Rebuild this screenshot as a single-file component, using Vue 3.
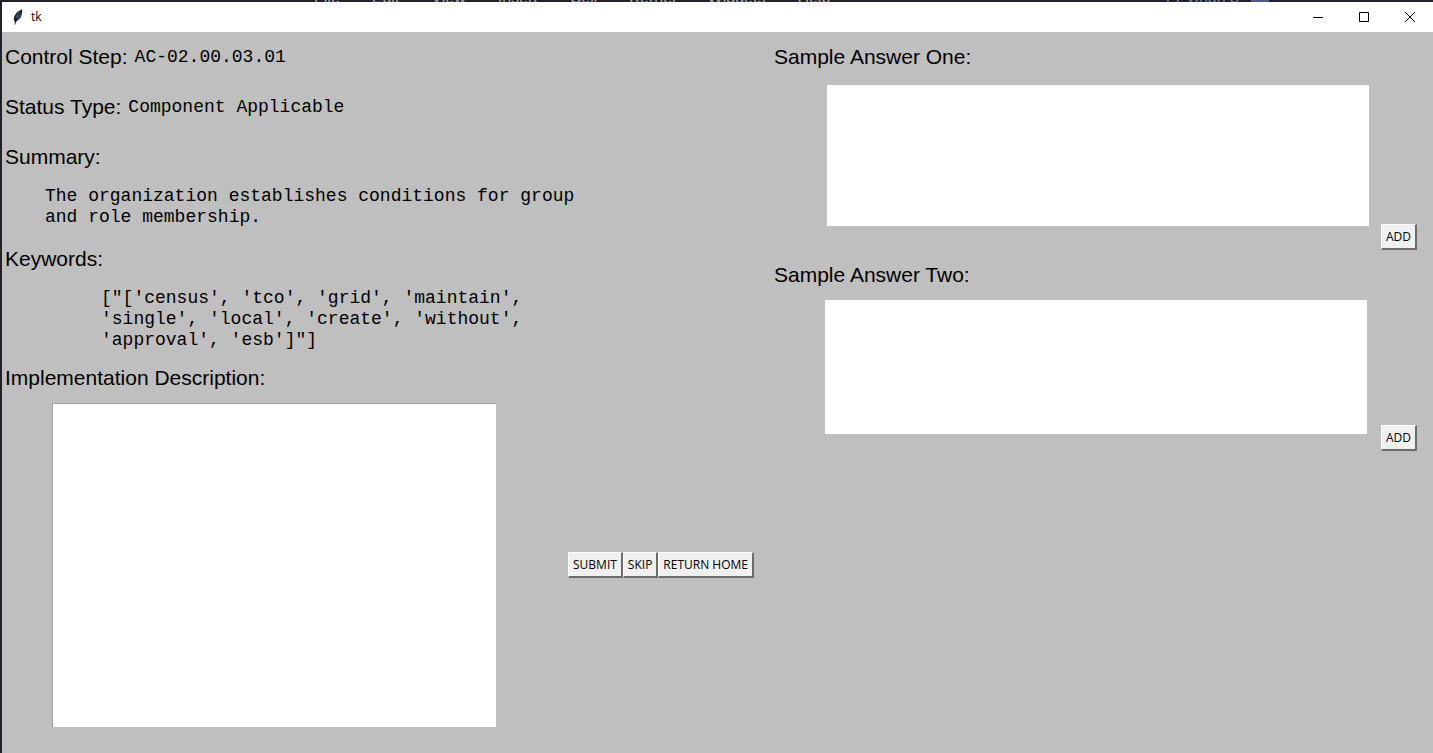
<script setup>
import { ref } from 'vue'

const menus = ['File', 'Edit', 'View', 'Insert', 'Cell', 'Kernel', 'Widgets', 'Help']
const description = ref('')
const samples = ref([
  { id: 'one', title: 'Sample Answer One:', text: '' },
  { id: 'two', title: 'Sample Answer Two:', text: '' }
])
const summary = 'The organization establishes conditions for group\nand role membership.'
const keywords = `["['census', 'tco', 'grid', 'maintain',\n'single', 'local', 'create', 'without',\n'approval', 'esb']"]`

function add(sample) {
  description.value += sample.text
}
</script>

<template>
  <div class="desktop">
    <div class="backdrop" aria-hidden="true">
      <span v-for="m in menus" :key="m">{{ m }}</span>
      <span class="kernel">( Python 3</span>
      <i class="badge"></i>
    </div>
    <main class="window">
      <header class="titlebar">
        <svg class="feather" viewBox="0 0 12 16" width="12" height="16" aria-hidden="true">
          <path d="M10 0.5C7 1 3 4.5 2 8.500C1.600 10.500 2 12 3 13.200C6.500 11.500 9 9 9.600 6C10 4 10.600 2 10 0.500Z" fill="#16222e" />
          <path d="M9 2C6.500 3.500 4.500 6 3.600 9.500L4.600 9C6 6 7.500 4 9 2Z" fill="#86b4de" />
          <path d="M8.800 4.500C7.500 6.500 5.500 8.500 4.200 11.500C6.500 10 8.200 7.500 8.800 4.500Z" fill="#4f7ca8" />
          <path d="M8.800 2.500C5.500 6 4 9 3 15.500" fill="none" stroke="#0b1015" stroke-width="0.900" />
        </svg>
        <h1>tk</h1>
        <div class="controls">
          <button type="button" aria-label="Minimize">
            <svg viewBox="0 0 12 12" width="12" height="12"><path d="M1 6.500H11" /></svg>
          </button>
          <button type="button" aria-label="Maximize">
            <svg viewBox="0 0 12 12" width="12" height="12"><path d="M1.500 1.500H10.500V10.500H1.500Z" /></svg>
          </button>
          <button type="button" aria-label="Close">
            <svg viewBox="0 0 12 12" width="12" height="12"><path d="M1 1L11 11M11 1L1 11" /></svg>
          </button>
        </div>
      </header>

      <div class="columns">
        <section class="details">
          <div class="row">
            <span class="label">Control Step:</span>
            <span class="mono">AC-02.00.03.01</span>
          </div>
          <div class="row">
            <span class="label">Status Type:</span>
            <span class="mono">Component Applicable</span>
          </div>
          <h2 class="label">Summary:</h2>
          <p class="mono summary">{{ summary }}</p>
          <h2 class="label">Keywords:</h2>
          <p class="mono keywords">{{ keywords }}</p>
          <label class="label" for="description">Implementation Description:</label>
          <div class="entry">
            <textarea id="description" v-model="description"></textarea>
            <div class="actions">
              <button class="btn" type="button">SUBMIT</button>
              <button class="btn" type="button">SKIP</button>
              <button class="btn" type="button">RETURN HOME</button>
            </div>
          </div>
        </section>

        <section class="samples">
          <div v-for="s in samples" :key="s.id" class="sample" :class="s.id">
            <label class="label" :for="s.id">{{ s.title }}</label>
            <div class="answer">
              <textarea :id="s.id" v-model="s.text"></textarea>
              <button class="btn" type="button" @click="add(s)">ADD</button>
            </div>
          </div>
        </section>
      </div>
    </main>
  </div>
</template>

<style>
body {
  margin: 0;
  background: #bfbfbf;
}
</style>

<style scoped>
* {
  box-sizing: border-box;
}
.desktop {
  display: flex;
  flex-direction: column;
  min-height: 100vh;
  background: #222127;
  color: #000;
}
.backdrop {
  display: flex;
  align-items: flex-end;
  gap: 32px;
  height: 2px;
  padding-left: 314px;
  overflow: hidden;
  font: 16px/8px "Liberation Sans", Arial, sans-serif;
  color: #a9a9b0;
}
.kernel {
  margin-left: auto;
  color: #7784a8;
}
.badge {
  width: 18px;
  height: 2px;
  margin: 0 164px 0 -20px;
  background: #4d5e8e;
}
.window {
  flex: 1;
  margin-left: 2px;
  background: #bfbfbf;
}
.titlebar {
  display: flex;
  align-items: center;
  height: 30px;
  padding-left: 10px;
  background: #fff;
}
.feather {
  margin-right: 7px;
}
h1 {
  margin: 0;
  font: 12px/16px "Open Sans", "Noto Sans", sans-serif;
}
.controls {
  display: flex;
  align-self: stretch;
  margin-left: auto;
}
.controls button {
  display: flex;
  align-items: center;
  justify-content: center;
  width: 46px;
  padding: 0;
  border: 0;
  background: none;
}
.controls path {
  fill: none;
  stroke: #000;
  stroke-width: 1;
}
.columns {
  display: grid;
  grid-template-columns: 769fr 662fr;
}
.details {
  padding: 0 17px 30px 3px;
}
.row {
  display: flex;
  align-items: center;
  gap: 7px;
  height: 50px;
}
.label {
  display: block;
  margin: 0;
  font: 21px/50px "Liberation Sans", Arial, sans-serif;
}
.mono {
  margin: 0;
  font: 18px/21px "Liberation Mono", "Courier New", monospace;
  white-space: pre;
}
.summary {
  padding: 4px 0 6px 40px;
}
.keywords {
  padding: 4px 0 2px 96px;
}
.entry {
  display: flex;
  align-items: center;
  justify-content: space-between;
  padding-left: 47px;
}
textarea {
  display: block;
  margin: 0;
  padding: 2px;
  border: 0;
  border-radius: 0;
  outline: 0;
  resize: none;
  background: #fff;
  font: 18px/21px "Liberation Mono", "Courier New", monospace;
}
.entry textarea {
  width: 444px;
  height: 324px;
  border-top: 1px solid #a0a0a0;
  border-left: 1px solid #a0a0a0;
}
.actions {
  display: flex;
}
.btn {
  flex: none;
  height: 26px;
  padding: 0 4px;
  border: 2px solid;
  border-color: #fff #6b6b6b #6b6b6b #fff;
  border-width: 1px 2px 2px 1px;
  background: #f0f0f0;
  color: #000;
  font: 12px/16px "Open Sans", "Noto Sans", sans-serif;
  white-space: nowrap;
}
.samples {
  padding: 0 16px 0 3px;
}
.answer {
  display: flex;
  align-items: flex-end;
  gap: 12px;
}
.answer textarea {
  flex: 1;
  min-width: 0;
}
.one .answer {
  padding: 3px 0 0 53px;
}
.one textarea {
  height: 141px;
  margin-bottom: 24px;
}
.two .answer {
  gap: 14px;
  padding-left: 51px;
}
.two textarea {
  height: 134px;
  margin-bottom: 17px;
}
</style>
